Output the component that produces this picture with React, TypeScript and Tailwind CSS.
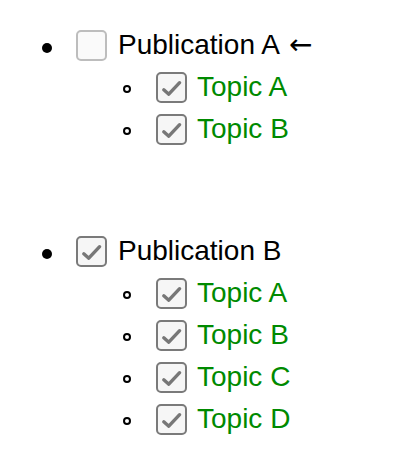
type Topic = { label: string };

type Publication = {
  title: string;
  checked: boolean;
  arrow?: boolean;
  topics: Topic[];
};

const publications: Publication[] = [
  {
    title: "Publication A",
    checked: false,
    arrow: true,
    topics: [{ label: "Topic A" }, { label: "Topic B" }],
  },
  {
    title: "Publication B",
    checked: true,
    topics: [
      { label: "Topic A" },
      { label: "Topic B" },
      { label: "Topic C" },
      { label: "Topic D" },
    ],
  },
];

const Checkbox = ({ checked }: { checked: boolean }) => {
  if (!checked) {
    return (
      <span className="block h-[31px] w-[31px] shrink-0 rounded-[5px] border-2 border-[#bdbdbd] bg-[#fafafa]" />
    );
  }
  return (
    <span className="block h-[31px] w-[31px] shrink-0 rounded-[5px] border-2 border-[#7a7a7a] bg-[#f6f6f6]">
      <svg width="27" height="27" viewBox="0 0 27 27" className="block">
        <path
          d="M5.8 15.8 L10.8 20.2 L21.6 8.7"
          fill="none"
          stroke="#777"
          strokeWidth="3.4"
          strokeLinecap="round"
          strokeLinejoin="round"
        />
      </svg>
    </span>
  );
};

const PublicationList = ({ pub }: { pub: Publication }) => {
  return (
    <ul>
      <li>
        <div className="flex h-[42px] items-center pl-[42px]">
          <span className="mt-[6px] block h-[10px] w-[10px] shrink-0 rounded-full bg-black" />
          <span className="ml-[24px]">
            <Checkbox checked={pub.checked} />
          </span>
          <span className="ml-[11px] whitespace-nowrap text-black">
            {pub.title}
          </span>
          {pub.arrow ? (
            <span className="ml-[9px] font-['DejaVu_Sans',sans-serif] text-[28px] leading-none text-black">
              ←
            </span>
          ) : null}
        </div>
        <ul>
          {pub.topics.map((t) => (
            <li key={t.label} className="flex h-[42px] items-center pl-[123px]">
              <span className="mt-[4px] block h-[8px] w-[8px] shrink-0 rounded-full border-2 border-black" />
              <span className="ml-[25px]">
                <Checkbox checked={true} />
              </span>
              <span className="ml-[10px] whitespace-nowrap text-[#008a00]">
                {t.label}
              </span>
            </li>
          ))}
        </ul>
      </li>
    </ul>
  );
};

const App = () => {
  return (
    <div className="min-h-[463px] w-[416px] bg-white pt-[24px] font-['Liberation_Sans',Arial,sans-serif] text-[28px]">
      <div className="flex flex-col gap-[80px]">
        {publications.map((p) => (
          <PublicationList key={p.title} pub={p} />
        ))}
      </div>
    </div>
  );
};

export default App;
